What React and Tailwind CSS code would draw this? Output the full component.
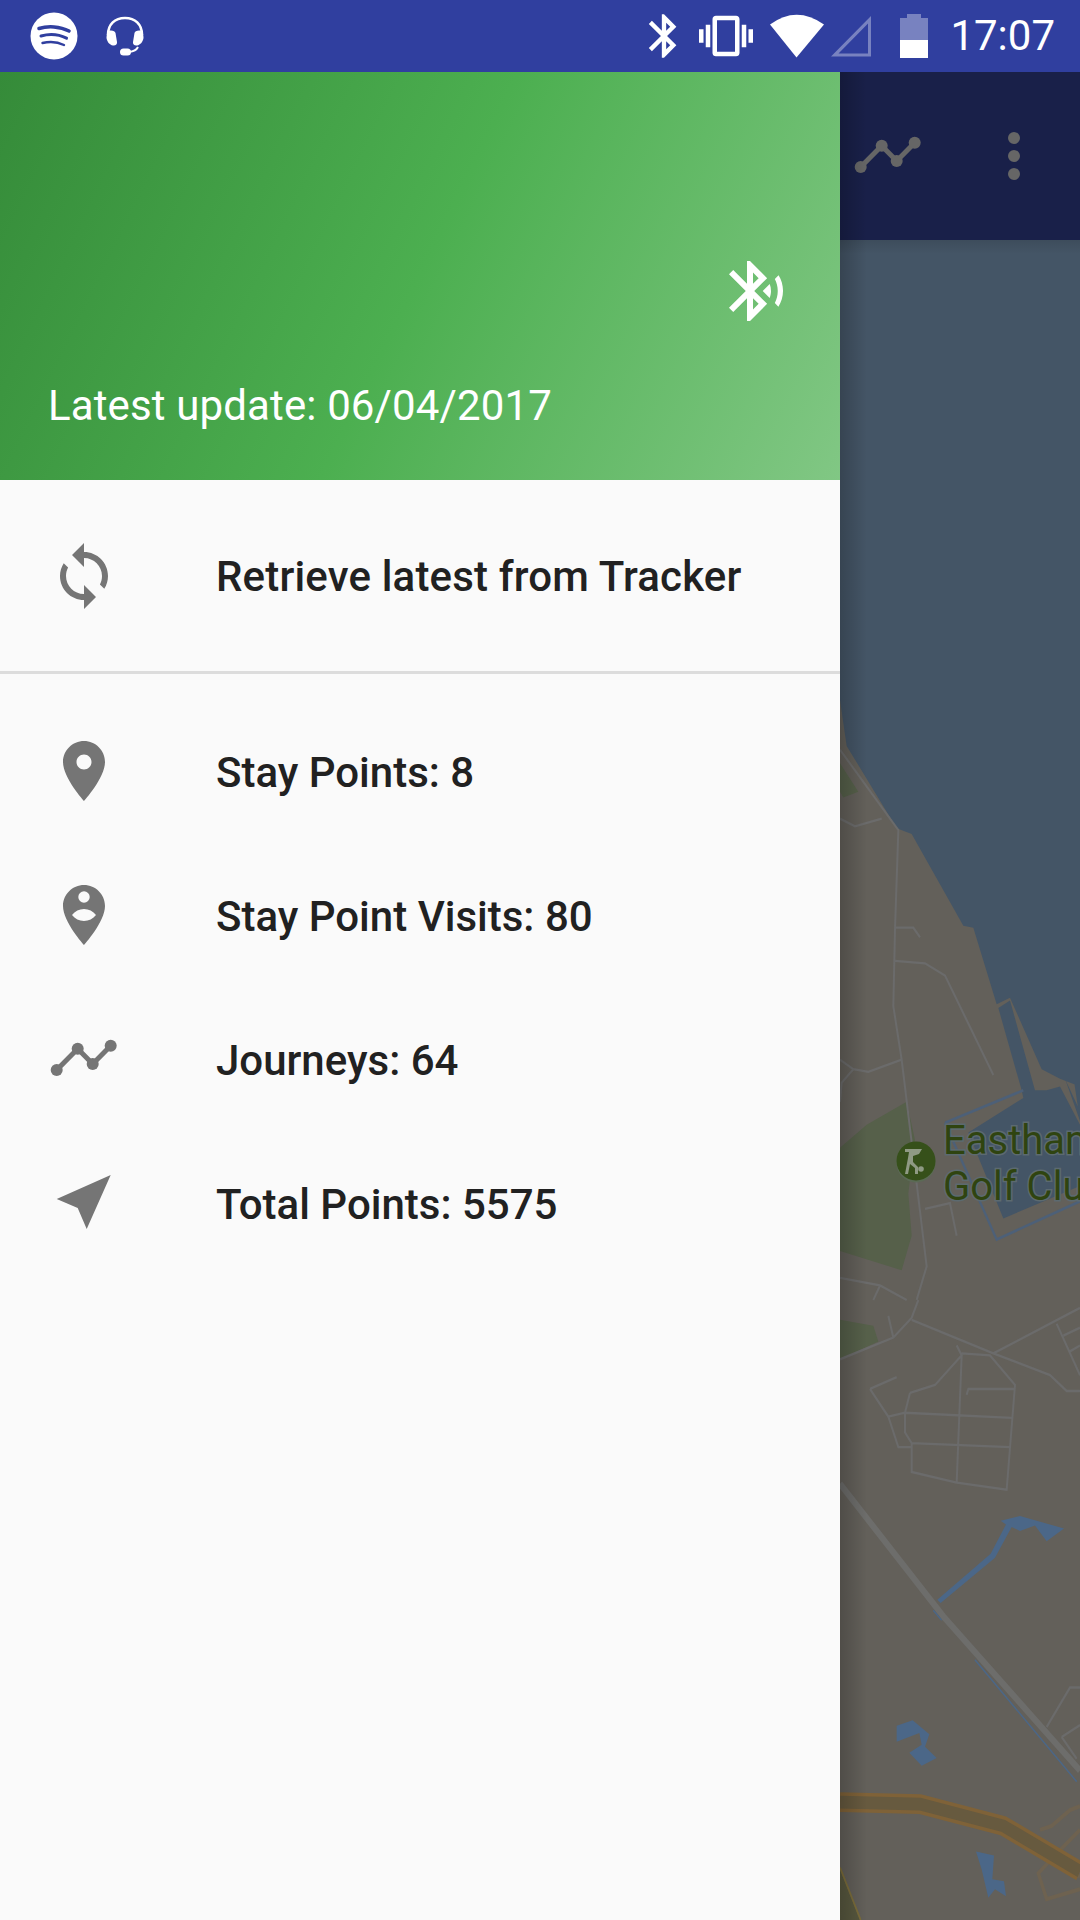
import React from "react";

const ROW_ICON = "w-[72px] h-[72px] fill-[#757575] shrink-0";

const JourneyIcon = ({ className }) => (
  <svg viewBox="0 0 72 72" className={className}>
    <polyline points="8.7,47 29.7,25.7 44.7,41 62.7,22.7" fill="none" strokeWidth="5" className="stroke-current" />
    <circle cx="8.7" cy="47" r="6" />
    <circle cx="29.7" cy="25.7" r="6" />
    <circle cx="44.7" cy="41" r="6" />
    <circle cx="62.7" cy="22.7" r="6" />
  </svg>
);

const SyncIcon = () => (
  <svg viewBox="0 0 24 24" className={ROW_ICON}>
    <path d="M12 4V1L8 5l4 4V6c3.31 0 6 2.69 6 6 0 1.01-.25 1.97-.7 2.8l1.46 1.46C19.54 15.03 20 13.57 20 12c0-4.42-3.58-8-8-8zm0 14c-3.31 0-6-2.69-6-6 0-1.01.25-1.97.7-2.8L5.24 7.74C4.46 8.97 4 10.43 4 12c0 4.42 3.58 8 8 8v3l4-4-4-4v3z" />
  </svg>
);

const PinIcon = () => (
  <svg viewBox="0 0 24 24" className={ROW_ICON}>
    <path d="M12 2C8.13 2 5 5.13 5 9c0 5.25 7 13 7 13s7-7.75 7-13c0-3.87-3.13-7-7-7zm0 9.5c-1.38 0-2.5-1.12-2.5-2.5s1.12-2.5 2.5-2.5 2.5 1.12 2.5 2.5-1.12 2.5-2.5 2.5z" />
  </svg>
);

const PersonPinIcon = () => (
  <svg viewBox="0 0 24 24" className={ROW_ICON}>
    <path
      fillRule="evenodd"
      d="M12 2C8.13 2 5 5.13 5 9c0 5.25 7 13 7 13s7-7.75 7-13c0-3.87-3.13-7-7-7zm0 2.1a1.9 1.9 0 1 1 0 3.8 1.9 1.9 0 0 1 0-3.8zM8 12c1-1.3 2.4-2 4-2s3 .7 4 2c-1 1.3-2.4 2-4 2s-3-.7-4-2z"
    />
  </svg>
);

const NearMeIcon = () => (
  <svg viewBox="0 0 72 72" className={ROW_ICON}>
    <polygon points="62.7,8 8.7,32 29.7,41 38.7,62" />
  </svg>
);

const StatusBar = () => (
  <div className="h-[72px] bg-[#303f9f] flex items-center text-white shrink-0">
    {/* spotify */}
    <svg viewBox="0 0 48 48" className="w-12 h-12 ml-[30px]">
      <circle cx="24" cy="24" r="23.5" fill="#fff" />
      <g fill="none" stroke="#303f9f" strokeLinecap="round">
        <path d="M9 16.5c9-2.8 21-2.2 30 2.5" strokeWidth="3.6" />
        <path d="M11 24c8-2.2 18-1.6 25.5 2.2" strokeWidth="3" />
        <path d="M12.5 31c7-1.7 15-1.2 21.5 2" strokeWidth="2.4" />
      </g>
    </svg>
    {/* headset */}
    <svg viewBox="0 0 40 42" className="w-10 h-[42px] ml-[27px]">
      <path d="M3 20C3 9 10 3 20 3s17 6 17 17" fill="none" stroke="#fff" strokeWidth="2.6" />
      <path d="M3 16c4-1 7 0 7.500 2l1.500 9c.5 2-1.500 4-4 3.500-3.500-.5-6-4-6.500-7.500 0-2 .5-5 1.500-7z" fill="#fff" />
      <path d="M37 16c-4-1-7 0-7.500 2l-1.500 9c-.5 2 1.500 4 4 3.500 3.500-.5 6-4 6.500-7.500 0-2-.5-5-1.500-7z" fill="#fff" />
      <path d="M33 32c-1.500 3-5 4.500-9 5" fill="none" stroke="#fff" strokeWidth="2" />
      <rect x="15" y="33.500" width="11" height="7" rx="3.500" fill="#fff" />
    </svg>

    {/* bluetooth */}
    <svg viewBox="0 0 24 24" className="w-[52px] h-[52px] ml-auto fill-white">
      <path d="M17.71 7.71L12 2h-1v7.59L6.41 5 5 6.41 10.59 12 5 17.59 6.41 19 11 14.41V22h1l5.710-5.710-4.300-4.290 4.300-4.290zM13 5.830l1.880 1.880L13 9.590V5.830zm1.880 10.460L13 18.170v-3.760l1.880 1.880z" />
    </svg>
    {/* vibrate */}
    <svg viewBox="0 0 24 24" className="w-[54px] h-[54px] ml-[9px] fill-white">
      <path d="M0 15h2V9H0v6zm3 2h2V7H3v10zm19-8v6h2V9h-2zm-3 8h2V7h-2v10zM16.500 3h-9C6.670 3 6 3.670 6 4.500v15c0 .83.67 1.500 1.500 1.500h9c.83 0 1.500-.67 1.500-1.500v-15c0-.83-.67-1.500-1.500-1.500zM16 19H8V5h8v14z" />
    </svg>
    {/* wifi */}
    <svg viewBox="0 0 54 44" className="w-[54px] h-11 ml-[17px] fill-white">
      <path d="M0 10.500Q26.500-9 54 10.500L26.500 43.500Z" />
    </svg>
    {/* no signal */}
    <svg viewBox="0 0 42 42" className="w-[42px] h-[42px] ml-[6px]">
      <path d="M41 1V41.500H1Z M38 8.500L8.500 38.500H38Z" fillRule="evenodd" fill="#fff" fillOpacity="0.35" />
    </svg>
    {/* battery */}
    <div className="w-7 h-11 ml-[28px] flex flex-col items-center">
      <div className="w-[14px] h-[4px] bg-white/35" />
      <div className="w-7 h-[22px] bg-white/35" />
      <div className="w-7 h-[18px] bg-white" />
    </div>
    <span className="ml-[22px] mr-[25px] font-['Roboto',sans-serif] text-[42px] leading-none font-normal">17:07</span>
  </div>
);

const Row = ({ icon, label, tall }) => (
  <div className={`flex items-center pl-12 ${tall ? "h-[191px] tracking-[0.17px]" : "h-[144px]"}`}>
    {icon}
    <span className="ml-[96px] pt-[3px] font-['Roboto',sans-serif] font-medium text-[42px] leading-none text-[#212121]">{label}</span>
  </div>
);

const Drawer = () => (
  <div className="w-[840px] shrink-0 bg-[#fafafa] flex flex-col z-10">
    <div className="h-[408px] bg-[linear-gradient(116deg,#358b39,#4caf50,#81c784)] flex flex-col items-end relative shrink-0">
      <svg viewBox="0 0 24 24" className="w-[72px] h-[72px] mt-[183px] mr-12 fill-white">
        <path d="M14.240 12.010l2.320 2.320c.28-.72.44-1.510.44-2.330 0-.82-.16-1.590-.43-2.310l-2.330 2.320zm5.290-5.300l-1.260 1.260c.63 1.210.98 2.570.98 4.020s-.36 2.820-.98 4.020l1.200 1.200c.97-1.540 1.540-3.360 1.540-5.310-.01-1.890-.55-3.670-1.480-5.190zm-3.820 1L10 2H9v7.590L4.410 5 3 6.410 8.590 12 3 17.590 4.410 19 9 14.410V22h1l5.710-5.710-4.300-4.290 4.300-4.290zM11 5.830l1.880 1.880L11 9.590V5.830zm1.880 10.460L11 18.170v-3.760l1.880 1.880z" />
      </svg>
      <div className="self-start ml-12 mt-[58px] font-['Roboto',sans-serif] text-[42px] tracking-[0.13px] leading-none text-white">
        Latest update: 06/04/2017
      </div>
    </div>
    <div className="border-b-[3px] border-[#dcdcdc]">
      <Row icon={<SyncIcon />} label="Retrieve latest from Tracker" tall />
    </div>
    <div className="pt-[25px]">
      <Row icon={<PinIcon />} label="Stay Points: 8" />
      <Row icon={<PersonPinIcon />} label="Stay Point Visits: 80" />
      <Row icon={<JourneyIcon className={ROW_ICON + " text-[#757575]"} />} label="Journeys: 64" />
      <Row icon={<NearMeIcon />} label="Total Points: 5575" />
    </div>
  </div>
);

// the dimmed google map behind the drawer, traced from the screenshot
const MapArt = () => (
  <svg viewBox="840 240 240 1680" className="w-[240px] h-[1680px] block">
    <rect x="840" y="240" width="240" height="1680" fill="#63605a" />
    <g transform="translate(830 700) scale(0.33333 0.38265)">
      <path
        d="M30 -1400H750V1100L705 990L750 1075V1100L725 955L750 1010L690 990L635 965L540 778L500 795L430 595L400 590L245 350L200 335L50 120L30 0Z"
        fill="#445566"
      />
      <path d="M505 805L540 785L615 1020L650 1020L690 1010L750 1110V1270L520 1355L415 1130L580 1040L575 1020Z" fill="#445566" />
      <path d="M345 1105L580 1020M345 1105L500 1410L750 1310" fill="none" stroke="#4d6078" strokeWidth="7" />
      <path d="M30 165L85 240L40 255L30 240Z" fill="#56604a" />
      <path d="M30 1170L110 1110L230 1050L255 1150L235 1290L245 1400L215 1490L30 1440Z" fill="#56604a" />
      <g fill="none" stroke="#6b6b6b" strokeWidth="6">
        <path d="M30 130L205 340L195 600L190 800L215 940L290 1480L260 1568" />
        <path d="M30 310L75 330L155 310" />
        <path d="M198 595H250L270 620" />
        <path d="M195 682L285 688L345 720L490 980" />
        <path d="M30 940L70 965L115 972L215 940" />
        <path d="M70 965L35 1000L30 1050" />
        <path d="M285 1330L360 1315L380 1400" />
        <path d="M30 1510L150 1530L230 1568M150 1530L130 1568" />
      </g>
    </g>
    <g transform="translate(916 1161)">
      <circle cx="0" cy="2" r="19.500" fill="#5b6a55" />
      <circle r="19.500" fill="#36501a" />
      <path d="M-11-12H6L3-7L-3-5L-3 1L2 6L2 13H-1L-1 7L-6 3L-8 13H-11L-8-3L-7-9H-11Z" fill="#8f9a84" />
      <circle cx="5" cy="8" r="2.800" fill="#8f9a84" />
    </g>
    <g fontFamily="Roboto, sans-serif" fontSize="40" fill="#2f4410" stroke="#5c6a70" strokeWidth="3" paintOrder="stroke">
      <text x="943" y="1154">Eastham</text>
      <text x="943" y="1200">Golf Club</text>
    </g>
    <g transform="translate(830 1300) scale(0.33333 0.39541)">
      <path d="M30 50L130 65L145 105L30 150Z" fill="#56604a" />
      <g fill="none" stroke="#6b6b6b" strokeWidth="6">
        <path d="M30 150L190 95L245 45L265 0" />
        <path d="M175 40L190 95" />
        <path d="M245 50L490 135L660 190L710 230H750M490 135L750 20M680 60L750 190M700 90L750 70M720 130L750 115" />
        <path d="M120 225L200 195M120 225L175 295L205 372H245M175 295L225 285L545 298M240 235L315 215L395 140L380 115M240 235L225 285L225 335L245 362L540 372M245 362L245 435L380 462L530 480L555 215L480 140L395 135M395 140L380 462M410 240L415 225H555" />
        <path d="M650 1080L720 980H750M695 1105L750 1075M695 1105L740 1160" />
      </g>
      <path d="M30 465L340 800L750 1190" fill="none" stroke="#6d6d6b" strokeWidth="17" />
      <path d="M310 785L335 810M435 910L740 1218" fill="none" stroke="#4b6788" strokeWidth="4" />
      <path d="M322 758L482 642L528 568L512 558L570 546L702 578L650 610L615 570L570 584L545 574L495 652L332 766Z" fill="#4b6788" />
      <path d="M200 1077L248 1063L298 1098L285 1130L320 1158L275 1178L238 1145L275 1125L268 1095L200 1117Z" fill="#4b6788" />
      <path d="M438 1395L492 1405L487 1465L522 1470L528 1508L495 1490L475 1512L455 1440Z" fill="#4b6788" />
      <path d="M630 1340L665 1330L720 1290L750 1280M750 1340L680 1400L625 1450L650 1515L750 1490M690 1400L750 1460" fill="none" stroke="#6e6250" strokeWidth="10" />
      <path d="M30 1270L270 1275L520 1330L750 1445" fill="none" stroke="#7f6238" strokeWidth="50" />
      <path d="M30 1270L270 1275L520 1330L750 1445" fill="none" stroke="#675a3f" strokeWidth="32" />
      <path d="M30 1440L90 1568H30Z" fill="#58583f" />
      <path d="M30 1435L92 1568" fill="none" stroke="#7d6e3a" strokeWidth="5" />
    </g>
  </svg>
);

const MainPane = () => (
  <div className="w-[240px] h-[1848px] flex flex-col relative overflow-hidden">
    <div className="h-[168px] bg-[#192049] flex items-center relative z-10 shrink-0">
      <JourneyIcon className="w-[72px] h-[72px] ml-3 fill-[#666666] text-[#666666]" />
      <div className="ml-[84px] flex flex-col gap-[6px]">
        <span className="w-3 h-3 rounded-full bg-[#666666]" />
        <span className="w-3 h-3 rounded-full bg-[#666666]" />
        <span className="w-3 h-3 rounded-full bg-[#666666]" />
      </div>
    </div>
    <MapArt />
    {/* toolbar and drawer drop shadows */}
    <div className="absolute left-0 right-0 top-[168px] h-[14px] bg-gradient-to-b from-black/10 to-transparent" />
    <div className="absolute left-0 top-0 bottom-0 w-[27px] bg-gradient-to-r from-black/20 to-transparent z-20" />
  </div>
);

export default function App() {
  return (
    <div className="w-[1080px] h-[1920px] overflow-hidden flex flex-col">
      <StatusBar />
      <div className="flex flex-1 min-h-0">
        <Drawer />
        <MainPane />
      </div>
    </div>
  );
}
